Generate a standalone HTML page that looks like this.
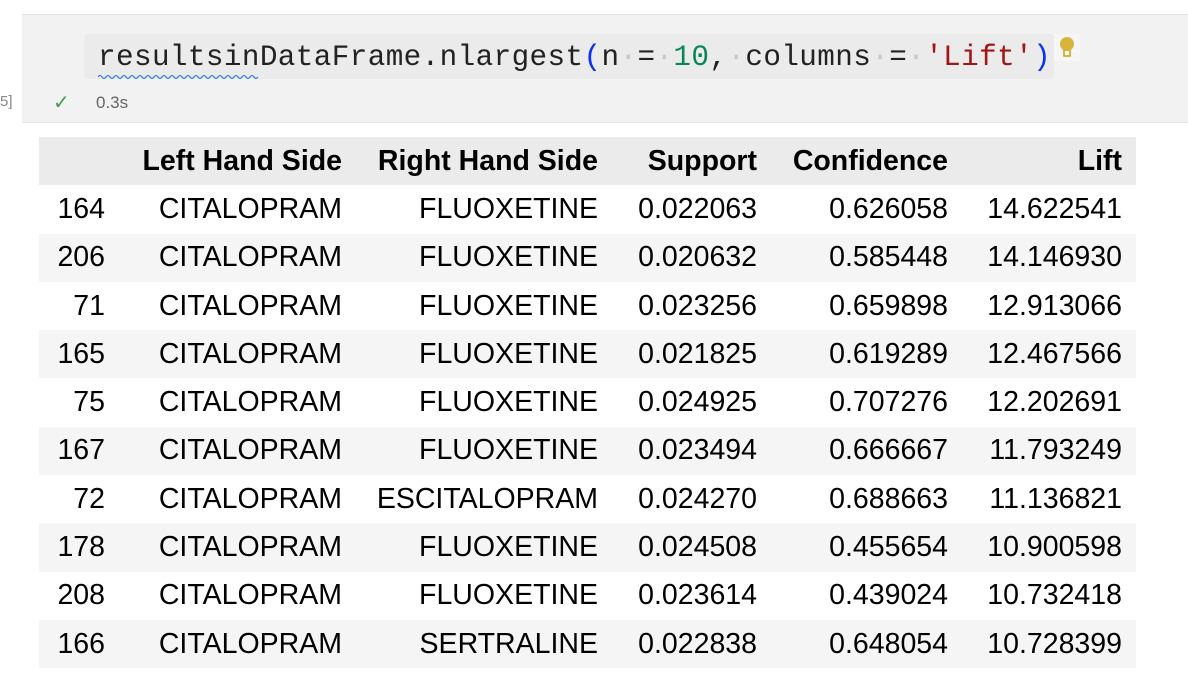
<!DOCTYPE html>
<html><head><meta charset="utf-8"><style>
body{margin:0;width:1188px;height:696px;background:#fff;position:relative;overflow:hidden;font-family:"Liberation Sans",sans-serif;}
.cell{position:absolute;left:22px;top:14px;width:1170px;height:107px;background:#f2f2f2;border-top:1px solid #e4e4e4;border-bottom:1px solid #e4e4e4;}
.hl{position:absolute;left:84px;top:34px;width:970px;height:45px;background:#ebebec;border-radius:4px;}
.code{position:absolute;left:98px;top:40px;font-family:"Liberation Mono",monospace;font-size:29.3px;letter-spacing:0.4px;color:#222;white-space:pre;line-height:36px;}
.dot{color:#c8c8c8}
.num{color:#098658}.str{color:#a31515}.par{color:#0431fa}
.ex{position:absolute;left:0;top:93px;font-size:15px;color:#888;}
.chk{position:absolute;left:53px;top:90px;color:#4a9a4a;font-size:20px;}
.time{position:absolute;left:96px;top:93px;font-size:17px;color:#666;}
table{position:absolute;left:39px;top:137px;border-collapse:collapse;font-size:28.5px;color:#000;}
td,th{height:48.3px;padding:0;text-align:right;}
th{font-weight:bold;background:#ebebeb;}
tr:nth-child(odd) td{background:#f5f5f5;}
.c0{width:66px}.c1{width:237px}.c2{width:256px}.c3{width:159px}.c4{width:191px}.c5{width:174px}
td:last-child,th:last-child{padding-right:14px}
</style></head><body>
<div class="cell"></div>
<div class="hl"></div>
<svg style="position:absolute;left:98px;top:73px" width="164" height="8"><path d="M0 4 Q2 1 4 4 T8 4 T12 4 T16 4 T20 4 T24 4 T28 4 T32 4 T36 4 T40 4 T44 4 T48 4 T52 4 T56 4 T60 4 T64 4 T68 4 T72 4 T76 4 T80 4 T84 4 T88 4 T92 4 T96 4 T100 4 T104 4 T108 4 T112 4 T116 4 T120 4 T124 4 T128 4 T132 4 T136 4 T140 4 T144 4 T148 4 T152 4 T156 4 T160 4" stroke="#3b7fe6" stroke-width="1.3" fill="none"/></svg>
<div class="code">resultsinDataFrame.nlargest<span class="par">(</span>n<span class="dot">·</span>=<span class="dot">·</span><span class="num">10</span>,<span class="dot">·</span>columns<span class="dot">·</span>=<span class="dot">·</span><span class="str">'Lift'</span><span class="par">)</span></div>
<svg style="position:absolute;left:1054px;top:34px" width="26" height="27"><rect width="26" height="27" fill="#f6f6f6"/><circle cx="13" cy="10" r="7" fill="#d8b43c"/><rect x="9" y="13" width="8" height="10" rx="1" fill="#d8b43c"/><rect x="11" y="17" width="4" height="4" fill="#fff"/></svg>
<div class="ex">5]</div>
<div class="chk">✓</div>
<div class="time">0.3s</div>
<table>
<tr><th class="c0"></th><th class="c1">Left Hand Side</th><th class="c2">Right Hand Side</th><th class="c3">Support</th><th class="c4">Confidence</th><th class="c5">Lift</th></tr>
<tr><td>164</td><td>CITALOPRAM</td><td>FLUOXETINE</td><td>0.022063</td><td>0.626058</td><td>14.622541</td></tr>
<tr><td>206</td><td>CITALOPRAM</td><td>FLUOXETINE</td><td>0.020632</td><td>0.585448</td><td>14.146930</td></tr>
<tr><td>71</td><td>CITALOPRAM</td><td>FLUOXETINE</td><td>0.023256</td><td>0.659898</td><td>12.913066</td></tr>
<tr><td>165</td><td>CITALOPRAM</td><td>FLUOXETINE</td><td>0.021825</td><td>0.619289</td><td>12.467566</td></tr>
<tr><td>75</td><td>CITALOPRAM</td><td>FLUOXETINE</td><td>0.024925</td><td>0.707276</td><td>12.202691</td></tr>
<tr><td>167</td><td>CITALOPRAM</td><td>FLUOXETINE</td><td>0.023494</td><td>0.666667</td><td>11.793249</td></tr>
<tr><td>72</td><td>CITALOPRAM</td><td>ESCITALOPRAM</td><td>0.024270</td><td>0.688663</td><td>11.136821</td></tr>
<tr><td>178</td><td>CITALOPRAM</td><td>FLUOXETINE</td><td>0.024508</td><td>0.455654</td><td>10.900598</td></tr>
<tr><td>208</td><td>CITALOPRAM</td><td>FLUOXETINE</td><td>0.023614</td><td>0.439024</td><td>10.732418</td></tr>
<tr><td>166</td><td>CITALOPRAM</td><td>SERTRALINE</td><td>0.022838</td><td>0.648054</td><td>10.728399</td></tr>
</table>
</body></html>
